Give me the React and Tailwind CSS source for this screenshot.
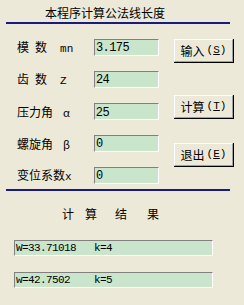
import React from "react";

const Field = ({ value, mono = true }) => (
    <div
        className={`w-[65px] h-[17px] bg-[#C9E6CC] border-t border-l border-t-[#808080] border-l-[#808080] border-b border-r border-b-white border-r-white flex items-center pl-[1px] text-[12px] leading-none text-black ${mono ? "font-['Liberation_Mono',monospace] tracking-[-0.6px]" : "font-['Liberation_Sans',sans-serif]"}`}
    >
        {value}
    </div>
);

const Btn = ({ label, hot }) => (
    <div className="w-[60px] h-[24px] border-b border-r border-b-black border-r-black">
        <div className="w-full h-full bg-[#ECE9D8] border-t border-l border-t-white border-l-white border-b border-r border-b-[#A0A0A0] border-r-[#A0A0A0] flex items-center justify-center text-[12px] text-black">
            {label}
            <span className="ml-[2px] font-['Liberation_Mono',monospace] text-[11px]">
                (<span className="underline">{hot}</span>)
            </span>
        </div>
    </div>
);

const rows = [
    { label: <>模<span className="ml-[6px]">数</span><span className="ml-[13px] font-['Liberation_Mono',monospace] text-[11px]">mn</span></>, value: "3.175" },
    { label: <>齿<span className="ml-[6px]">数</span><span className="ml-[13px] font-['Liberation_Mono',monospace] text-[11px]">Z</span></>, value: "24" },
    { label: <>压力角<span className="ml-[10px] text-[11px]">α</span></>, value: "25", mono: false },
    { label: <>螺旋角<span className="ml-[10px] text-[11px]">β</span></>, value: "0" },
    { label: <>变位系数<span className="font-['Liberation_Mono',monospace] text-[11px]">x</span></>, value: "0" },
];

const Result = ({ text }) => (
    <div className="w-[199px] h-[16px] bg-[#C9E6CC] border-t border-l border-t-[#808080] border-l-[#808080] border-b border-r border-b-white border-r-white flex items-center pl-[1px] font-['Liberation_Mono',monospace] text-[11px] tracking-[-0.6px] whitespace-pre text-black">
        {text}
    </div>
);

export default function App() {
    return (
        <div className="w-[244px] h-[305px] bg-[#ECE9D8] font-['Noto_Sans_CJK_SC',sans-serif] text-black overflow-hidden">
            {/* heading */}
            <div className="pt-[6px] pl-[45px] h-[22px] text-[12px] leading-[14px]">本程序计算公法线长度</div>
            <div className="ml-[6px] w-[224px] h-[2px] bg-[#1A1A80]" />

            {/* inputs + buttons */}
            <div className="flex mt-[15px] h-[148px]">
                <div className="flex flex-col gap-[15px] pl-[17px]">
                    {rows.map((r, i) => (
                        <div key={i} className="flex items-center h-[17px]">
                            <div className="w-[77px] text-[12px] leading-none whitespace-nowrap">{r.label}</div>
                            <Field value={r.value} mono={r.mono !== false} />
                        </div>
                    ))}
                </div>
                <div className="flex flex-col ml-[15px]">
                    <Btn label="输入" hot="S" />
                    <div className="mt-[32px]"><Btn label="计算" hot="T" /></div>
                    <div className="mt-[24px]"><Btn label="退出" hot="E" /></div>
                </div>
            </div>

            <div className="ml-[6px] mt-[2px] w-[224px] h-[2px] bg-[#1A1A80]" />

            {/* results */}
            <div className="flex pl-[62px] mt-[16px] text-[12px] leading-[14px]">
                <span>计</span>
                <span className="ml-[11px]">算</span>
                <span className="ml-[18px]">结</span>
                <span className="ml-[20px]">果</span>
            </div>
            <div className="flex flex-col gap-[16px] pl-[14px] mt-[19px]">
                <Result text="W=33.71018   k=4" />
                <Result text="w=42.7502    k=5" />
            </div>
        </div>
    );
}
